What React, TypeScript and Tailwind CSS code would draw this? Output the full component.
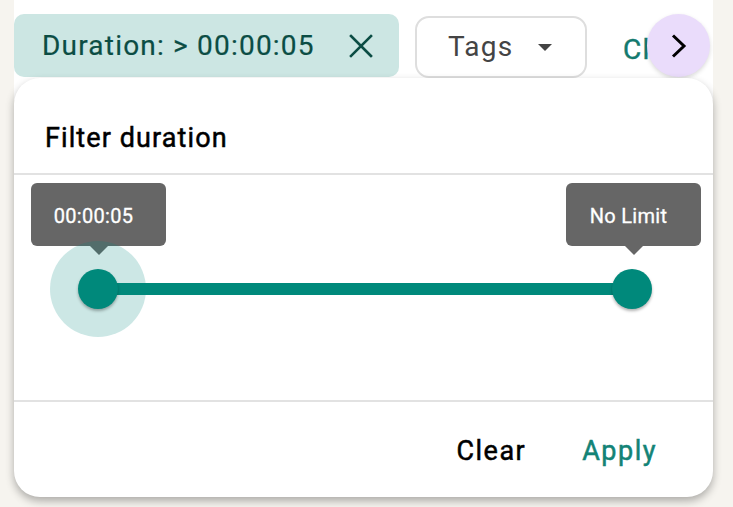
function Tooltip({ label }: { label: string }) {
    return (
        <div className="relative w-[135px] h-[63px] rounded-md bg-[#666666] flex items-center justify-center pr-[10px] pt-[2px] text-white text-[20px] tracking-[0.3px] [-webkit-text-stroke:0.3px_white]">
            {label}
            <div className="absolute left-1/2 -translate-x-1/2 -bottom-[9px] w-0 h-0 border-l-[9px] border-r-[9px] border-t-[9px] border-l-transparent border-r-transparent border-t-[#666666]" />
        </div>
    );
}

export default function App() {
    return (
        <div className="w-[733px] h-[507px] bg-[#f6f4ef] relative overflow-hidden" style={{ fontFamily: "Roboto, 'Liberation Sans', sans-serif" }}>
            {/* filter chips bar */}
            <div className="absolute left-[14px] top-0 w-[699px] h-[100px] bg-white">
                <div className="flex items-start pt-[14px] gap-4">
                    <div className="h-[63px] w-[385px] rounded-[10px] bg-[#cce6e3] flex items-center pl-[28px] pr-[26px] justify-between text-[#0b4d44]">
                        <span className="text-[28px] tracking-[1.2px] [-webkit-text-stroke:0.2px_#0b4d44]">Duration: &gt; 00:00:05</span>
                        <svg width="24" height="24" viewBox="0 0 24 24" fill="none" stroke="currentColor" strokeWidth="2.6" strokeLinecap="square">
                            <path d="M2 2 22 22M22 2 2 22" />
                        </svg>
                    </div>
                    <div className="mt-[2px] h-[62px] w-[172px] rounded-[14px] border-2 border-[#dedede] flex items-center pl-[31px] pr-[33px] justify-between text-[#444444]">
                        <span className="text-[28px] tracking-[1.2px]">Tags</span>
                        <div className="w-0 h-0 border-l-[7px] border-r-[7px] border-t-[7px] border-l-transparent border-r-transparent border-t-[#444444]" />
                    </div>
                    <span className="mt-[15px] ml-[20px] text-[28px] tracking-[1.2px] text-[#137a6e] [-webkit-text-stroke:0.4px_#137a6e]">Clear</span>
                </div>
                <div className="absolute left-[633px] top-[14px] w-[63px] h-[63px] rounded-full bg-[#eadcfb] flex items-center justify-center shadow-[0_2px_4px_rgba(0,0,0,0.15)]">
                    <svg width="16" height="24" viewBox="0 0 16 24" fill="none" stroke="black" strokeWidth="3">
                        <path d="M2 1.5 13 12 2 22.5" />
                    </svg>
                </div>
            </div>

            {/* popover */}
            <div className="absolute left-[14px] top-[78px] w-[699px] h-[419px] bg-white rounded-[26px] shadow-[0_4px_8px_rgba(0,0,0,0.3)] flex flex-col">
                <div className="h-[97px] border-b-2 border-[#e2e2e2] flex items-center pl-[31px]">
                    <span className="text-[27px] tracking-[1.1px] text-black mt-[25px] [-webkit-text-stroke:0.5px_black]">Filter duration</span>
                </div>
                <div className="relative h-[225px]">
                    <div className="absolute left-[17px] top-[8px]"><Tooltip label="00:00:05" /></div>
                    <div className="absolute left-[552px] top-[8px]"><Tooltip label="No Limit" /></div>
                    <div className="absolute left-[84px] top-[108px] w-[534px] h-[12px] bg-[#00897b] rounded-full" />
                    <div className="absolute left-[36px] top-[66px] w-[96px] h-[96px] rounded-full bg-[#00897b]/20" />
                    <div className="absolute left-[64px] top-[94px] w-[40px] h-[40px] rounded-full bg-[#00897b] shadow-[0_2px_3px_rgba(0,0,0,0.3)]" />
                    <div className="absolute left-[598px] top-[94px] w-[40px] h-[40px] rounded-full bg-[#00897b] shadow-[0_2px_3px_rgba(0,0,0,0.3)]" />
                </div>
                <div className="border-t-2 border-[#e2e2e2] flex-1 flex items-center justify-end pr-[56px] gap-[56px] pt-[4px]">
                    <span className="text-[27px] tracking-[1.5px] text-black [-webkit-text-stroke:0.5px_black]">Clear</span>
                    <span className="text-[27px] tracking-[1.5px] text-[#138376] [-webkit-text-stroke:0.5px_#138376]">Apply</span>
                </div>
            </div>
        </div>
    );
}
